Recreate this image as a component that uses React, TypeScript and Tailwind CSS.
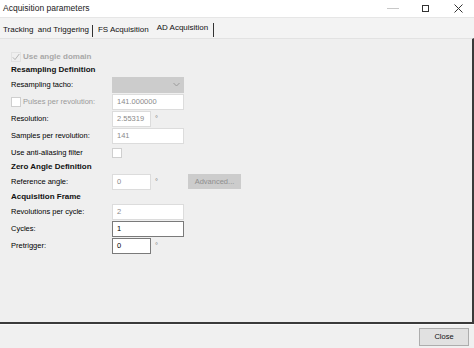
import React from "react";

const FONT = { fontFamily: '"Liberation Sans", Arial, sans-serif' };

function Label({ children, muted = false }: { children: React.ReactNode; muted?: boolean }) {
    return <span className={`w-[101px] shrink-0 text-[7.5px] ${muted ? "text-[#9a9a9a]" : "text-[#000]"}`}>{children}</span>;
}

function Field({ value, w = "w-[72px]", dark = false, muted = true }: { value: string; w?: string; dark?: boolean; muted?: boolean }) {
    return (
        <div className={`${w} h-[16px] flex items-center px-[4px] bg-white border text-[7.5px] ${dark ? "border-[#7a7a7a]" : "border-[#dcdcdc]"} ${muted ? "text-[#8a8a8a]" : "text-[#000]"}`}>
            {value}
        </div>
    );
}

function Box({ className = "" }: { className?: string }) {
    return <span className={`w-[10px] h-[10px] bg-white border border-[#cfcfcf] shrink-0 ${className}`} />;
}

function Heading({ children, h }: { children: React.ReactNode; h: string }) {
    return <div className={`${h} flex items-center text-[8px] font-bold text-[#111]`}>{children}</div>;
}

export default function App() {
    return (
        <div className="w-[474px] h-[348px] flex flex-col bg-[#f0f0f0] overflow-hidden" style={FONT}>
            {/* title bar */}
            <div className="h-[18px] flex items-center bg-white border-b border-[#e6e6e6]">
                <span className="pl-[3px] text-[8.5px] text-[#222] flex-1">Acquisition parameters</span>
                <span className="w-[12px] h-px bg-[#c8c8c8] mr-[23px]" />
                <span className="w-[7px] h-[7px] border border-[#333] mr-[25px]" />
                <svg width="9" height="9" viewBox="0 0 9 9" className="mr-[11px]">
                    <path d="M0.5 0.5 L8.5 8.5 M8.5 0.5 L0.5 8.5" stroke="#333" strokeWidth="1" />
                </svg>
            </div>

            {/* tabs */}
            <div className="h-[20px] flex items-end bg-[#f3f3f3] text-[8px] text-[#111]">
                <span className="pl-[3px] pr-[3px] h-[16px] flex items-center">Tracking&nbsp; and Triggering</span>
                <span className="w-px h-[12px] bg-[#333] mb-[1px]" />
                <span className="pl-[5px] pr-[8px] h-[16px] flex items-center">FS Acquisition</span>
                <span className="pl-0 pr-[5px] h-[18px] flex items-center pb-[2px]">AD Acquisition</span>
                <span className="w-px h-[14px] bg-[#333] mb-[1px]" />
            </div>

            {/* panel */}
            <div className="h-[286px] flex flex-col pl-[11px] pt-[11px] bg-[#efefef] border-t border-[#e2e2e2] border-r-2 border-r-[#3a3a3a] border-b-2 border-b-[#3a3a3a]">
                <div className="h-[14px] flex items-center gap-[2px] text-[8px] font-bold text-[#a8a8a8]">
                    <svg width="10" height="10" viewBox="0 0 10 10">
                        <rect x="0.5" y="0.5" width="9" height="9" fill="none" stroke="#e2e2e2" />
                        <path d="M1.8 5.3 L4 7.6 L8.3 2" stroke="#b5b5b5" strokeWidth="1" fill="none" />
                    </svg>
                    Use angle domain
                </div>
                <Heading h="h-[12px]">Resampling Definition</Heading>

                <div className="h-[17px] flex items-center">
                    <Label>Resampling tacho:</Label>
                    <div className="w-[72px] h-[16px] bg-[#cccccc] flex items-center justify-end pr-[4px]">
                        <svg width="7" height="5" viewBox="0 0 7 5">
                            <path d="M0.5 1 L3.5 4 L6.5 1" stroke="#9a9a9a" fill="none" />
                        </svg>
                    </div>
                </div>
                <div className="h-[17px] flex items-center">
                    <span className="w-[101px] shrink-0 flex items-center gap-[2px] text-[7.5px] text-[#9a9a9a]">
                        <Box />
                        Pulses per revolution:
                    </span>
                    <Field value="141.000000" />
                </div>
                <div className="h-[17px] flex items-center">
                    <Label>Resolution:</Label>
                    <Field value="2.55319" w="w-[39px]" />
                    <span className="ml-[4px] text-[7.5px] text-[#777]">°</span>
                </div>
                <div className="h-[17px] flex items-center">
                    <Label>Samples per revolution:</Label>
                    <Field value="141" />
                </div>
                <div className="h-[17px] flex items-center">
                    <Label>Use anti-aliasing filter</Label>
                    <Box />
                </div>

                <Heading h="h-[12px]">Zero Angle Definition</Heading>
                <div className="h-[17px] flex items-center">
                    <Label>Reference angle:</Label>
                    <Field value="0" w="w-[39px]" />
                    <span className="ml-[4px] w-[33px] text-[7.5px] text-[#777]">°</span>
                    <div className="w-[53px] h-[15px] bg-[#cccccc] flex items-center justify-center text-[7.5px] text-[#8f8f8f]">Advanced...</div>
                </div>

                <Heading h="h-[13px]">Acquisition Frame</Heading>
                <div className="h-[17px] flex items-center">
                    <Label>Revolutions per cycle:</Label>
                    <Field value="2" />
                </div>
                <div className="h-[17px] flex items-center">
                    <Label>Cycles:</Label>
                    <Field value="1" dark muted={false} />
                </div>
                <div className="h-[17px] flex items-center">
                    <Label>Pretrigger:</Label>
                    <Field value="0" w="w-[39px]" dark muted={false} />
                    <span className="ml-[4px] text-[7.5px] text-[#777]">°</span>
                </div>
            </div>

            {/* footer */}
            <div className="flex-1 flex items-start justify-end pt-[3px] pr-[5px] border-t border-[#fafafa]">
                <button className="w-[50px] h-[18px] bg-[#e1e1e1] border border-[#adadad] text-[7.5px] text-[#111]">Close</button>
            </div>
        </div>
    );
}
